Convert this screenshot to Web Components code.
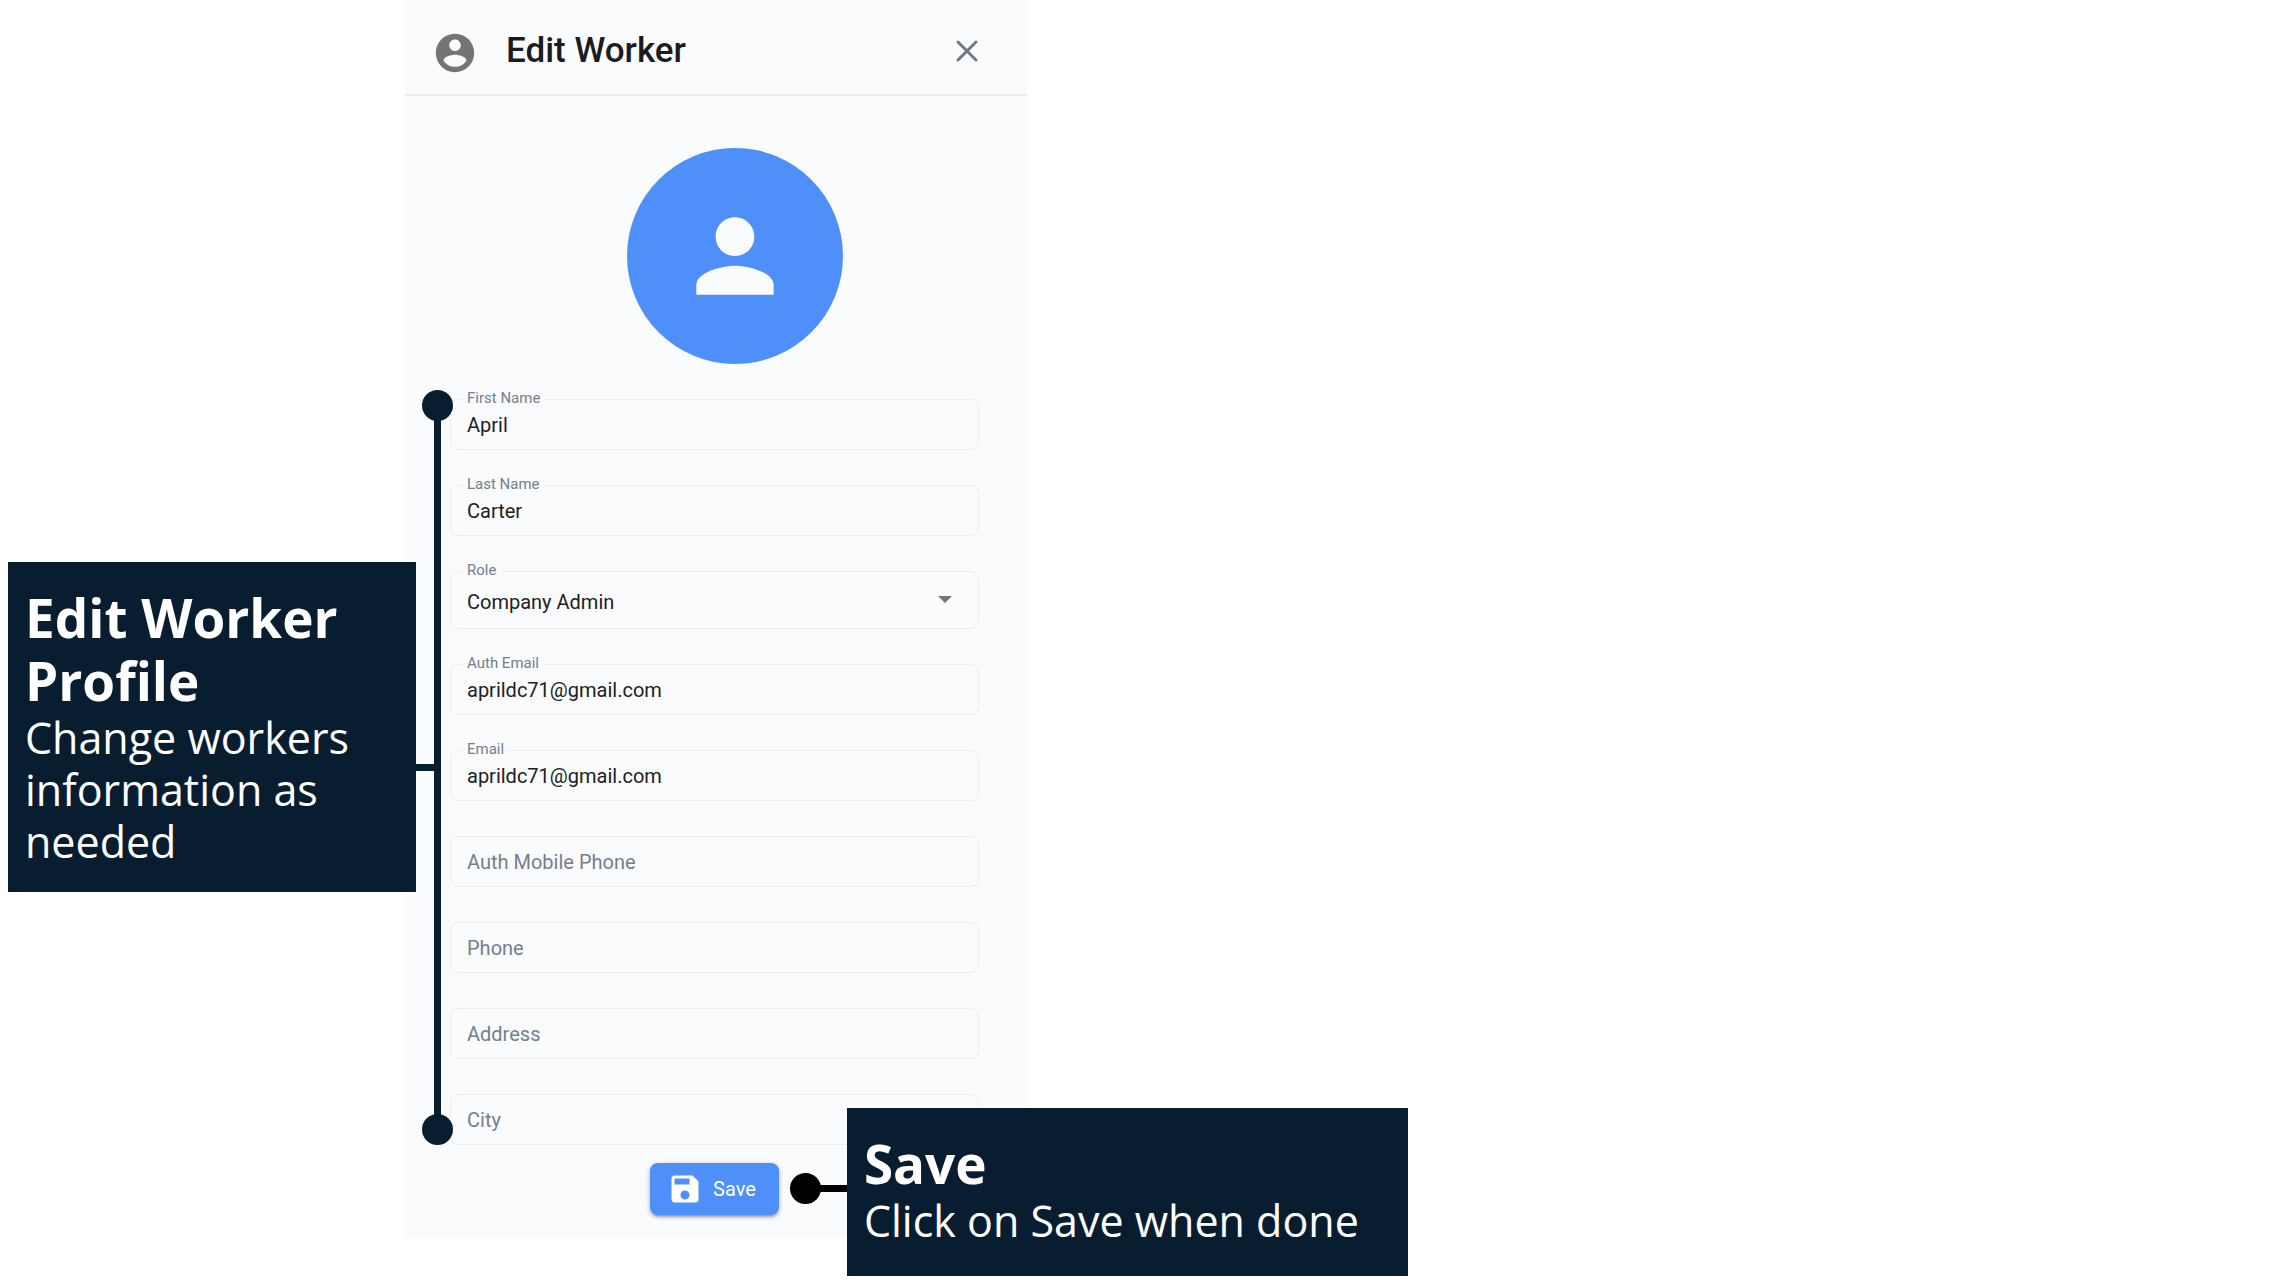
<!DOCTYPE html>
<html lang="en">
<head>
<meta charset="UTF-8">
<meta name="viewport" content="width=device-width, initial-scale=1">
<title>Edit Worker</title>
<style>
  body {
    margin: 0;
    background: #ffffff;
    font-family: Roboto, "Liberation Sans", sans-serif;
    --primary-color: #4f8ff9;
    --panel-color: #fafbfd;
    --line-color: #ebecee;
    --label-color: #73808b;
    --text-color: #202124;
    --note-color: #081e30;
  }
</style>
</head>
<body>
<guide-page>
  <worker-panel heading="Edit Worker">
    <worker-field label="First Name" value="April"></worker-field>
    <worker-field label="Last Name" value="Carter"></worker-field>
    <worker-select label="Role" value="Company Admin"></worker-select>
    <worker-field label="Auth Email" value="aprildc71@gmail.com" type="email"></worker-field>
    <worker-field label="Email" value="aprildc71@gmail.com" type="email"></worker-field>
    <worker-field label="Auth Mobile Phone" type="tel"></worker-field>
    <worker-field label="Phone" type="tel"></worker-field>
    <worker-field label="Address"></worker-field>
    <worker-field label="City"></worker-field>

    <range-marker slot="fields-note">
      <callout-note>
        <span slot="title">Edit Worker Profile</span>
        Change workers information as needed
      </callout-note>
    </range-marker>

    <save-button slot="action">Save</save-button>
    <point-marker slot="action-note">
      <callout-note>
        <span slot="title">Save</span>
        Click on Save when done
      </callout-note>
    </point-marker>
  </worker-panel>
</guide-page>

<script>
class GuidePage extends HTMLElement {
  constructor() {
    super();
    this.attachShadow({ mode: 'open' }).innerHTML = `
      <style>
        :host {
          display: grid;
          grid-template-columns: 405fr 622fr 1257fr;
          align-items: start;
          box-sizing: border-box;
          min-height: 100vh;
          padding-bottom: 48px;
        }
        main {
          grid-column: 2;
          min-width: 0;
        }
      </style>
      <main><slot></slot></main>
    `;
  }
}

class WorkerPanel extends HTMLElement {
  constructor() {
    super();
    this.attachShadow({ mode: 'open' });
  }

  connectedCallback() {
    this.shadowRoot.innerHTML = `
      <style>
        :host {
          display: block;
          background: var(--panel-color);
        }
        header {
          display: flex;
          align-items: center;
          box-sizing: border-box;
          height: 96px;
          padding: 12px 44px 0 27px;
          border-bottom: 2px solid var(--line-color);
        }
        header > svg {
          width: 46px;
          height: 46px;
          fill: #727476;
        }
        h1 {
          flex: 1;
          margin: 0 0 4px 28px;
          font-size: 35px;
          line-height: 40px;
          font-weight: 500;
          color: #1b1c1d;
        }
        .close {
          display: flex;
          margin-bottom: 5px;
          padding: 0;
          border: 0;
          background: none;
          cursor: pointer;
        }
        .close svg {
          width: 32px;
          height: 32px;
          fill: none;
          stroke: #6b7a86;
          stroke-width: 3;
          stroke-linecap: round;
        }
        form {
          display: flex;
          flex-direction: column;
          padding: 52px 48px 23px 45px;
        }
        .avatar {
          display: flex;
          align-items: center;
          justify-content: center;
          align-self: center;
          width: 216px;
          height: 216px;
          margin: 0 0 35px 40px;
          border-radius: 50%;
          background: var(--primary-color);
        }
        .avatar svg {
          width: 116px;
          height: 116px;
          fill: var(--panel-color);
        }
        .fields {
          position: relative;
          display: flex;
          flex-direction: column;
          gap: 35px;
        }
        .actions {
          position: relative;
          align-self: center;
          margin-top: 18px;
        }
      </style>
      <header>
        <svg viewBox="0 0 24 24" aria-hidden="true"><path d="M12 2C6.48 2 2 6.48 2 12s4.48 10 10 10 10-4.48 10-10S17.52 2 12 2zm0 3c1.66 0 3 1.34 3 3s-1.34 3-3 3-3-1.34-3-3 1.34-3 3-3zm0 14.2c-2.5 0-4.71-1.28-6-3.22.03-1.99 4-3.08 6-3.08 1.99 0 5.97 1.09 6 3.08-1.29 1.94-3.5 3.22-6 3.22z"/></svg>
        <h1>${this.getAttribute('heading')}</h1>
        <button class="close" type="button" aria-label="Close">
          <svg viewBox="0 0 32 32"><path d="M7 7l18 18M25 7L7 25"/></svg>
        </button>
      </header>
      <form>
        <div class="avatar">
          <svg viewBox="0 0 24 24" aria-hidden="true"><path d="M12 12c2.21 0 4-1.79 4-4s-1.79-4-4-4-4 1.79-4 4 1.79 4 4 4zm0 2c-2.67 0-8 1.34-8 4v2h16v-2c0-2.66-5.33-4-8-4z"/></svg>
        </div>
        <div class="fields">
          <slot></slot>
          <slot name="fields-note"></slot>
        </div>
        <div class="actions">
          <slot name="action"></slot>
          <slot name="action-note"></slot>
        </div>
      </form>
    `;
  }
}

// Shared by the text field and the select
const fieldStyle = `
  :host {
    display: block;
    position: relative;
  }
  input, select {
    display: block;
    box-sizing: border-box;
    width: 100%;
    height: 51px;
    margin: 0;
    padding: 0 16px;
    border: 1px solid var(--line-color);
    border-radius: 8px;
    outline: none;
    appearance: none;
    background: transparent;
    font-family: inherit;
    font-size: 20px;
    color: var(--text-color);
  }
  input:focus, select:focus {
    border-color: var(--primary-color);
  }
  label {
    position: absolute;
    left: 12px;
    top: -10px;
    padding: 0 5px;
    background: var(--panel-color);
    font-size: 15px;
    line-height: 18px;
    color: var(--label-color);
  }
`;

class WorkerField extends HTMLElement {
  constructor() {
    super();
    this.attachShadow({ mode: 'open' });
  }

  connectedCallback() {
    const type = this.getAttribute('type') || 'text';
    const value = this.getAttribute('value') || '';
    this.shadowRoot.innerHTML = `
      <style>
        ${fieldStyle}
        input:placeholder-shown:not(:focus) + label {
          top: 13px;
          font-size: 20px;
          line-height: 26px;
          pointer-events: none;
        }
      </style>
      <input id="field" type="${type}" value="${value}" placeholder=" ">
      <label for="field">${this.getAttribute('label')}</label>
    `;
  }
}

class WorkerSelect extends HTMLElement {
  constructor() {
    super();
    this.attachShadow({ mode: 'open' });
  }

  connectedCallback() {
    this.shadowRoot.innerHTML = `
      <style>
        ${fieldStyle}
        select {
          height: 58px;
          padding-top: 3px;
        }
        svg {
          position: absolute;
          right: 27px;
          top: 25px;
          width: 14px;
          height: 7px;
          fill: #757575;
          pointer-events: none;
        }
      </style>
      <select id="field"><option>${this.getAttribute('value')}</option></select>
      <label for="field">${this.getAttribute('label')}</label>
      <svg viewBox="0 0 14 7" aria-hidden="true"><path d="M0 0h14L7 7z"/></svg>
    `;
  }
}

class SaveButton extends HTMLElement {
  constructor() {
    super();
    this.attachShadow({ mode: 'open' }).innerHTML = `
      <style>
        :host {
          display: block;
        }
        button {
          display: flex;
          align-items: center;
          gap: 10px;
          height: 52px;
          padding: 0 23px 0 17px;
          border: 0;
          border-radius: 8px;
          background: var(--primary-color);
          box-shadow: 0 3px 3px -2px rgba(0, 0, 0, 0.3), 0 2px 4px rgba(0, 0, 0, 0.2), 0 1px 6px rgba(0, 0, 0, 0.12);
          font-family: inherit;
          font-size: 20px;
          color: #ffffff;
          cursor: pointer;
        }
        svg {
          width: 36px;
          height: 36px;
          fill: #ffffff;
        }
      </style>
      <button type="button">
        <svg viewBox="0 0 24 24" aria-hidden="true"><path d="M17 3H5c-1.11 0-2 .9-2 2v14c0 1.1.89 2 2 2h14c1.1 0 2-.9 2-2V7l-4-4zm-5 16c-1.66 0-3-1.34-3-3s1.34-3 3-3 3 1.34 3 3-1.34 3-3 3zm3-10H5V5h10v4z"/></svg>
        <slot></slot>
      </button>
    `;
  }
}

// Vertical bar with a dot at each end, beside the list of fields
class RangeMarker extends HTMLElement {
  constructor() {
    super();
    this.attachShadow({ mode: 'open' }).innerHTML = `
      <style>
        :host {
          position: absolute;
          top: -9px;
          bottom: 0;
          left: -28px;
          display: flex;
          flex-direction: column;
          align-items: center;
          width: 31px;
        }
        .dot {
          width: 31px;
          height: 31px;
          border-radius: 50%;
          background: var(--note-color);
        }
        .bar {
          flex: 1;
          width: 7px;
          margin: -2px 0;
          background: var(--note-color);
        }
        .link {
          position: absolute;
          top: 50%;
          right: 50%;
          width: 24px;
          height: 7px;
          margin-top: -4px;
          background: var(--note-color);
        }
        .note {
          position: absolute;
          top: 172px;
          right: 37px;
          width: 408px;
        }
      </style>
      <div class="dot"></div>
      <div class="bar"></div>
      <div class="dot"></div>
      <div class="link"></div>
      <div class="note"><slot></slot></div>
    `;
  }
}

class PointMarker extends HTMLElement {
  constructor() {
    super();
    this.attachShadow({ mode: 'open' }).innerHTML = `
      <style>
        :host {
          position: absolute;
          top: -55px;
          left: calc(100% + 11px);
          display: flex;
          align-items: flex-start;
        }
        .dot {
          width: 31px;
          height: 31px;
          margin-top: 65px;
          border-radius: 50%;
          background: #000000;
        }
        .line {
          width: 28px;
          height: 7px;
          margin: 77px 0 0 -2px;
          background: #000000;
        }
        .note {
          width: 561px;
        }
      </style>
      <div class="dot"></div>
      <div class="line"></div>
      <div class="note"><slot></slot></div>
    `;
  }
}

class CalloutNote extends HTMLElement {
  constructor() {
    super();
    this.attachShadow({ mode: 'open' }).innerHTML = `
      <style>
        :host {
          display: block;
          box-sizing: border-box;
          min-height: 168px;
          padding: 24px 17px;
          background: var(--note-color);
          font-family: "Open Sans", "Noto Sans", sans-serif;
          color: #ffffff;
        }
        h2, p {
          margin: 0;
        }
        h2 {
          font-size: 53px;
          line-height: 63px;
          font-weight: 700;
        }
        p {
          font-size: 43px;
          line-height: 52px;
        }
      </style>
      <h2><slot name="title"></slot></h2>
      <p><slot></slot></p>
    `;
  }
}

customElements.define('guide-page', GuidePage);
customElements.define('worker-panel', WorkerPanel);
customElements.define('worker-field', WorkerField);
customElements.define('worker-select', WorkerSelect);
customElements.define('save-button', SaveButton);
customElements.define('range-marker', RangeMarker);
customElements.define('point-marker', PointMarker);
customElements.define('callout-note', CalloutNote);
</script>
</body>
</html>
